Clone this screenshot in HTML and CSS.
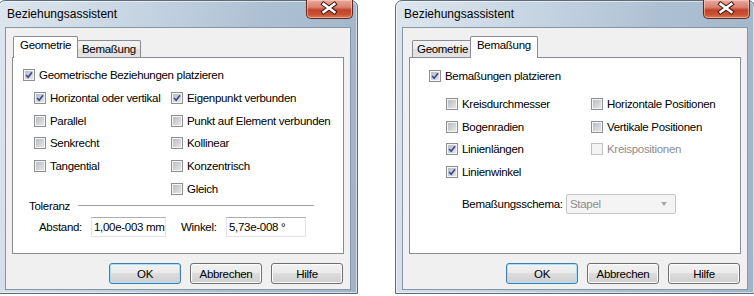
FILE: index.html
```html
<!DOCTYPE html>
<html>
<head>
<meta charset="utf-8">
<title>Beziehungsassistent</title>
<link rel="stylesheet" href="styles.css">
</head>
<body>

<div class="desk">

    <!-- Geometrie -->
    <div class="window left">
        <div class="titlebar">
            <span class="title">Beziehungsassistent</span>
            <span class="close">
                <svg width="47" height="19" viewBox="0 0 47 19">
                    <path d="M18 5 L29 13 M29 5 L18 13" stroke="#3b1a14" stroke-width="4.6" stroke-linecap="square"/>
                    <path d="M18 5 L29 13 M29 5 L18 13" stroke="#fff" stroke-width="2.6" stroke-linecap="square"/>
                </svg>
            </span>
        </div>
        <div class="client">
            <div class="tabs">
                <span class="tab active">Geometrie</span>
                <span class="tab">Bemaßung</span>
            </div>
            <div class="panel geo">
                <div class="cb main"><span class="box"><svg viewBox="0 0 12 12"><path d="M2.5 6 L5 8.7 L9.6 2.6"/></svg></span>Geometrische Beziehungen platzieren</div>
                <div class="grid">
                    <div class="cb"><span class="box"><svg viewBox="0 0 12 12"><path d="M2.5 6 L5 8.7 L9.6 2.6"/></svg></span>Horizontal oder vertikal</div>
                    <div class="cb"><span class="box"><svg viewBox="0 0 12 12"><path d="M2.5 6 L5 8.7 L9.6 2.6"/></svg></span>Eigenpunkt verbunden</div>
                    <div class="cb"><span class="box"></span>Parallel</div>
                    <div class="cb"><span class="box"></span>Punkt auf Element verbunden</div>
                    <div class="cb"><span class="box"></span>Senkrecht</div>
                    <div class="cb"><span class="box"></span>Kollinear</div>
                    <div class="cb"><span class="box"></span>Tangential</div>
                    <div class="cb"><span class="box"></span>Konzentrisch</div>
                    <div></div>
                    <div class="cb"><span class="box"></span>Gleich</div>
                </div>
                <div class="group">
                    <span class="legend">Toleranz</span>
                    <span class="rule"></span>
                </div>
                <div class="fields">
                    <span class="lbl abstand">Abstand:</span>
                    <span class="edit abstand">1,00e-003 mm</span>
                    <span class="lbl winkel">Winkel:</span>
                    <span class="edit winkel">5,73e-008 °</span>
                </div>
            </div>
            <div class="buttons">
                <span class="btn default">OK</span>
                <span class="btn">Abbrechen</span>
                <span class="btn">Hilfe</span>
            </div>
        </div>
    </div>

    <!-- Bemaßung -->
    <div class="window right">
        <div class="titlebar">
            <span class="title">Beziehungsassistent</span>
            <span class="close">
                <svg width="47" height="19" viewBox="0 0 47 19">
                    <path d="M18 5 L29 13 M29 5 L18 13" stroke="#3b1a14" stroke-width="4.6" stroke-linecap="square"/>
                    <path d="M18 5 L29 13 M29 5 L18 13" stroke="#fff" stroke-width="2.6" stroke-linecap="square"/>
                </svg>
            </span>
        </div>
        <div class="client">
            <div class="tabs">
                <span class="tab">Geometrie</span>
                <span class="tab active">Bemaßung</span>
            </div>
            <div class="panel dim">
                <div class="cb main"><span class="box"><svg viewBox="0 0 12 12"><path d="M2.5 6 L5 8.7 L9.6 2.6"/></svg></span>Bemaßungen platzieren</div>
                <div class="grid">
                    <div class="cb"><span class="box"></span>Kreisdurchmesser</div>
                    <div class="cb"><span class="box"></span>Horizontale Positionen</div>
                    <div class="cb"><span class="box"></span>Bogenradien</div>
                    <div class="cb"><span class="box"></span>Vertikale Positionen</div>
                    <div class="cb"><span class="box"><svg viewBox="0 0 12 12"><path d="M2.5 6 L5 8.7 L9.6 2.6"/></svg></span>Linienlängen</div>
                    <div class="cb disabled"><span class="box"></span>Kreispositionen</div>
                    <div class="cb"><span class="box"><svg viewBox="0 0 12 12"><path d="M2.5 6 L5 8.7 L9.6 2.6"/></svg></span>Linienwinkel</div>
                </div>
                <div class="schema">
                    <span class="lbl">Bemaßungsschema:</span>
                    <span class="combo">Stapel<span class="arrow"></span></span>
                </div>
            </div>
            <div class="buttons">
                <span class="btn default">OK</span>
                <span class="btn">Abbrechen</span>
                <span class="btn">Hilfe</span>
            </div>
        </div>
    </div>

</div>

</body>
</html>
```

FILE: styles.css
```css
html, body
{
    margin: 0;
    padding: 0;
    background-color: #fff;
}

body {
    font-family: "Liberation Sans", Arial, sans-serif;
    font-size: 11.5px;
    letter-spacing: -0.3px;
    color: #000;
    overflow: hidden;
}

.desk {
    display: flex;
    width: 754px;
    height: 296px;
    overflow: hidden;
}

/* window frame */
.window {
    flex: none;
    width: 360px;
    height: 294px;
    box-sizing: border-box;
    display: flex;
    flex-direction: column;
    border: 1px solid #5d6b79;
    border-radius: 7px 7px 0 0;
    background: linear-gradient(100deg, #dde6ee 0%, #c6d4e2 35%, #adc0d3 65%, #9fb4c9 100%);
    box-shadow: inset 0 0 0 1px rgba(255,255,255,0.55);
}

.window.left {
    margin-left: -2px;
}

.window.right {
    margin-left: 37px;
}

.titlebar {
    height: 26px;
    display: flex;
    align-items: center;
    padding: 0 4px 0 8px;
}

.title {
    font-size: 12px;
    letter-spacing: 0;
    color: #000;
}

.close {
    margin-left: auto;
    align-self: flex-start;
    margin-top: -1px;
    width: 47px;
    height: 19px;
    box-sizing: border-box;
    border: 1px solid #5b2a22;
    border-top: none;
    border-radius: 0 0 5px 5px;
    background: linear-gradient(#e9a99b 0%, #d9826f 40%, #c4432a 55%, #c8512f 80%, #dc7a55 100%);
    box-shadow: inset 0 0 0 1px rgba(255,220,210,0.5);
    display: flex;
}

.close svg {
    margin: -1px 0 0 -1px;
}

.client {
    flex: 1;
    margin: 0 6px 3px 6px;
    border: 1px solid #8596a7;
    background-color: #f0f0f0;
    padding: 7px 6px 0 6px;
    display: flex;
    flex-direction: column;
}

/* tabs */
.tabs {
    display: flex;
    align-items: flex-end;
    height: 23px;
    margin-bottom: -1px;
    padding-left: 3px;
    position: relative;
}

.tab {
    height: 16px;
    margin-bottom: 1px;
    padding: 0 4px;
    border: 1px solid #898c95;
    border-bottom: none;
    border-radius: 2px 2px 0 0;
    background: linear-gradient(#f3f3f3, #ebebeb 50%, #dedede 51%, #e3e3e3);
    display: flex;
    align-items: center;
    margin-right: -1px;
}

.tab.active {
    height: 22px;
    margin: 0 -1px 0 -2px;
    padding: 0 6px 5px 6px;
    background: #fff;
    position: relative;
    box-sizing: border-box;
}

.panel {
    height: 197px;
    box-sizing: border-box;
    border: 1px solid #898c95;
    background-color: #fff;
}

/* checkboxes */
.cb {
    display: flex;
    align-items: center;
    height: 16px;
    white-space: nowrap;
}

.box {
    flex: none;
    width: 12px;
    height: 12px;
    box-sizing: border-box;
    margin-right: 4px;
    border: 1px solid #8e8f8f;
    background: linear-gradient(135deg, #b4b8bd, #eaeaeb);
    box-shadow: inset 0 0 0 1px #f4f4f4;
    display: flex;
}

.box svg {
    width: 10px;
    height: 10px;
}

.box path {
    fill: none;
    stroke: #34489a;
    stroke-width: 1.9;
}

.cb.disabled {
    color: #8d8d8d;
}

.cb.disabled .box {
    border-color: #c2c2c2;
    background: #f4f4f4;
    box-shadow: none;
}

.grid {
    display: grid;
}

/* Geometrie page */
.geo .main {
    margin: 9px 0 0 10px;
}

.geo .grid {
    margin: 3.5px 0 0 21px;
    grid-template-columns: 137px 1fr;
    grid-auto-rows: 22.75px;
    align-items: center;
}

.group {
    display: flex;
    align-items: center;
    height: 14px;
    margin: -1px 29px 0 16px;
}

.rule {
    flex: 1;
    margin-left: 8px;
    height: 1px;
    background: #a0a0a0;
    border-bottom: 1px solid #fff;
}

.fields {
    display: flex;
    align-items: center;
    margin: 4px 0 0 26px;
}

.lbl.abstand {
    width: 42px;
    text-align: right;
    margin-right: 10px;
}

.lbl.winkel {
    width: 35px;
    margin: 0 10px 0 15px;
    text-align: right;
}

.edit {
    height: 20px;
    box-sizing: border-box;
    padding: 0 2px;
    border: 1px solid #e2e3ea;
    border-top-color: #abadb3;
    background: #fff;
    display: flex;
    align-items: center;
    white-space: nowrap;
}

.edit.abstand {
    width: 75px;
}

.edit.winkel {
    width: 80px;
}

/* Bemaßung page */
.dim .main {
    margin: 10px 0 0 19px;
}

.dim .grid {
    margin: 8.75px 0 0 36px;
    grid-template-columns: 145px 1fr;
    grid-auto-rows: 22.5px;
    align-items: center;
}

.schema {
    display: flex;
    align-items: center;
    margin: 11px 0 0 52px;
}

.schema .lbl {
    width: 104px;
    white-space: nowrap;
}

.combo {
    width: 110px;
    height: 20px;
    box-sizing: border-box;
    border: 1px solid #c4c6c9;
    border-radius: 2px;
    background: #f4f4f4;
    color: #8d8d8d;
    padding-left: 3px;
    display: flex;
    align-items: center;
}

.arrow {
    margin-left: auto;
    margin-right: 8px;
    width: 0;
    height: 0;
    border-left: 3.5px solid transparent;
    border-right: 3.5px solid transparent;
    border-top: 4px solid #a9a9a9;
}

/* buttons */
.buttons {
    display: flex;
    justify-content: flex-end;
    gap: 9px;
    margin-top: 9px;
    padding-right: 1px;
}

.btn {
    width: 72px;
    height: 21px;
    box-sizing: border-box;
    border: 1px solid #707070;
    border-radius: 3px;
    background: linear-gradient(#f2f2f2, #ebebeb 45%, #dddddd 50%, #cfcfcf);
    box-shadow: inset 0 0 0 1px #fcfcfc;
    display: flex;
    align-items: center;
    justify-content: center;
}

.btn.default {
    border-color: #3c7fb1;
    box-shadow: inset 0 0 0 1px #a6e0fb;
}
```
